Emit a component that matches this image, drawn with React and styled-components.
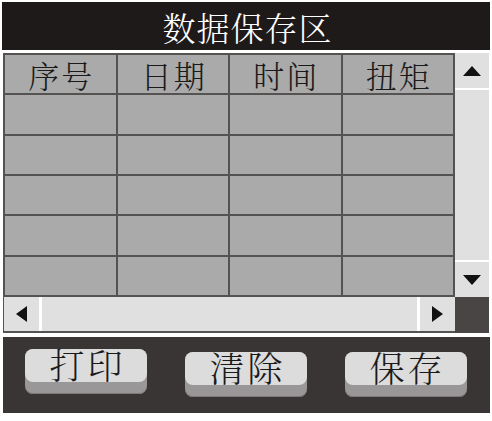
import React from "react";
import styled, { createGlobalStyle } from "styled-components";

const GlobalStyle = createGlobalStyle`
  html, body {
    margin: 0;
    padding: 0;
    background: #ffffff;
  }
  body {
    font-family: "Noto Serif CJK SC", "Noto Sans CJK SC", "Liberation Serif", serif;
  }
`;

const columns = ["序号", "日期", "时间", "扭矩"];
const rows = [0, 1, 2, 3, 4];

const buttons = [
  { label: "打印", drop: 0 },
  { label: "清除", drop: 3 },
  { label: "保存", drop: 3 },
];

const App = () => {
  return (
    <Page>
      <GlobalStyle />
      <TitleBar>数据保存区</TitleBar>

      <Panel>
        <Table>
          {columns.map((c) => (
            <HeadCell key={c}>{c}</HeadCell>
          ))}
          {rows.map((r) =>
            columns.map((c) => <Cell key={r + c} />)
          )}
        </Table>

        <VScroll>
          <ScrollButton $side="top">
            <Arrow $dir="up" />
          </ScrollButton>
          <Track />
          <ScrollButton $side="bottom">
            <Arrow $dir="down" />
          </ScrollButton>
        </VScroll>

        <HScroll>
          <ScrollButton $side="left">
            <Arrow $dir="left" />
          </ScrollButton>
          <Track />
          <ScrollButton $side="right">
            <Arrow $dir="right" />
          </ScrollButton>
        </HScroll>

        <Corner />
      </Panel>

      <ButtonBar>
        {buttons.map((b) => (
          <KeyButton key={b.label} $drop={b.drop}>
            <span>{b.label}</span>
          </KeyButton>
        ))}
      </ButtonBar>
    </Page>
  );
};

const Page = styled.div`
  width: 488px;
  padding: 2px 2px 0 2px;
  display: flex;
  flex-direction: column;
`;

const TitleBar = styled.div`
  height: 48px;
  background: #1e1a1a;
  color: #ffffff;
  font-size: 33px;
  font-weight: 300;
  letter-spacing: 1px;
  display: flex;
  align-items: center;
  justify-content: center;
  padding-left: 3px;
`;

const Panel = styled.div`
  margin-top: 3px;
  margin-left: 1px;
  display: grid;
  grid-template-columns: 452px 34px;
  grid-template-rows: 244px 36px;
`;

const Table = styled.div`
  display: grid;
  grid-template-columns: repeat(4, 1fr);
  grid-template-rows: repeat(6, 1fr);
  gap: 2px;
  padding: 2px;
  background: #555252;
`;

const Cell = styled.div`
  background: #aaaaaa;
`;

const HeadCell = styled(Cell)`
  display: flex;
  align-items: center;
  justify-content: center;
  font-size: 31px;
  line-height: 1;
  font-weight: 300;
  letter-spacing: 2px;
  padding-left: 2px;
  color: #1a1a1a;
`;

const VScroll = styled.div`
  background: #e0e0e0;
  display: flex;
  flex-direction: column;
`;

const HScroll = styled.div`
  background: #e0e0e0;
  display: flex;
  border-bottom: 2px solid #555252;
  border-left: 1px solid #555252;
`;

const Track = styled.div`
  flex: 1;
`;

const ScrollButton = styled.div`
  flex: 0 0 35px;
  display: flex;
  align-items: center;
  justify-content: center;
  background: #e0e0e0;
  ${(p) => p.$side === "top" && "border-bottom: 2px solid #ffffff;"}
  ${(p) => p.$side === "bottom" && "border-top: 2px solid #ffffff;"}
  ${(p) => p.$side === "left" && "border-right: 3px solid #ffffff;"}
  ${(p) => p.$side === "right" && "border-left: 3px solid #ffffff;"}
`;

const Arrow = styled.div`
  width: 0;
  height: 0;
  ${(p) =>
    p.$dir === "up" &&
    "border-left: 9px solid transparent; border-right: 9px solid transparent; border-bottom: 10px solid #111;"}
  ${(p) =>
    p.$dir === "down" &&
    "border-left: 9px solid transparent; border-right: 9px solid transparent; border-top: 10px solid #111;"}
  ${(p) =>
    p.$dir === "left" &&
    "border-top: 8px solid transparent; border-bottom: 8px solid transparent; border-right: 11px solid #111;"}
  ${(p) =>
    p.$dir === "right" &&
    "border-top: 8px solid transparent; border-bottom: 8px solid transparent; border-left: 11px solid #111;"}
`;

const Corner = styled.div`
  background: #4a4545;
`;

const ButtonBar = styled.div`
  margin-top: 4px;
  margin-left: 1px;
  height: 76px;
  background: #393534;
  display: flex;
  align-items: flex-start;
  gap: 38px;
  padding: 12px 0 0 22px;
  box-sizing: border-box;
`;

const KeyButton = styled.div`
  margin-top: ${(p) => p.$drop}px;
  width: 122px;
  height: 45px;
  box-sizing: border-box;
  border-radius: 8px;
  background: #999797;
  box-shadow: inset 0 -1px 0 #7a7878;

  span {
    display: flex;
    align-items: flex-start;
    justify-content: center;
    height: 33px;
    border-radius: 8px;
    background: #dcdcdc;
    font-size: 35px;
    line-height: 30px;
    font-weight: 300;
    letter-spacing: 3px;
    padding-left: 3px;
    color: #1a1a1a;
  }
`;

export default App;
